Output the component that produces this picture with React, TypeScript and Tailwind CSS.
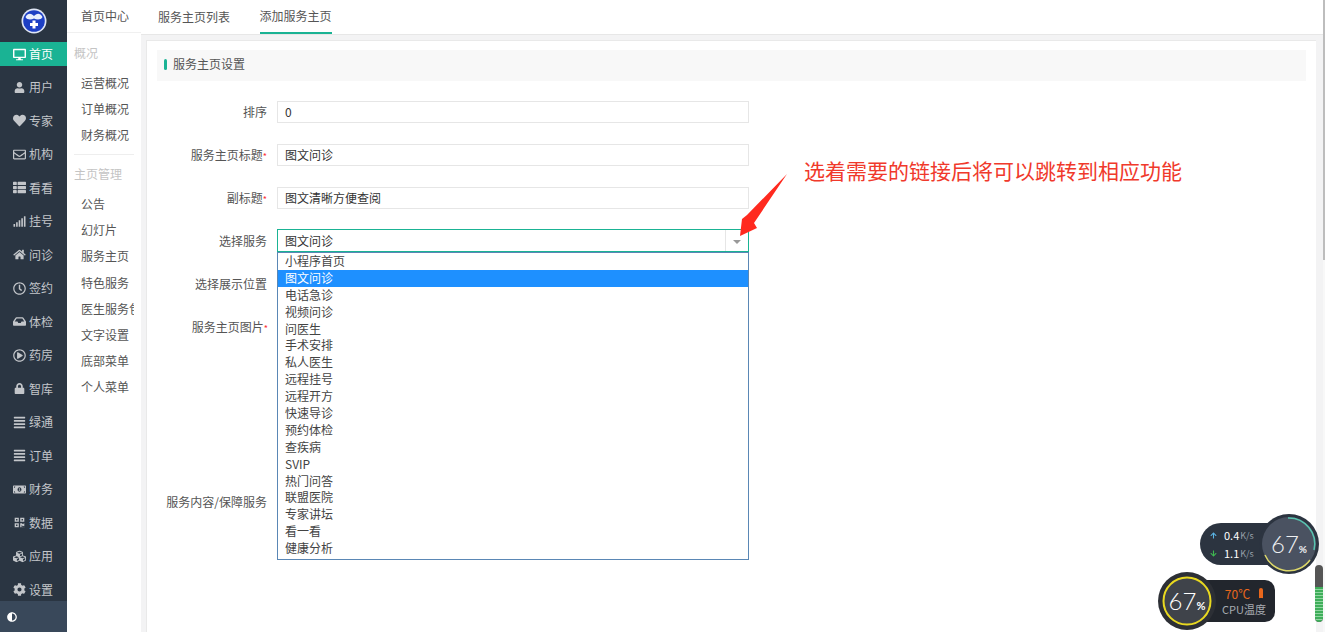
import type { ComponentType } from "react";
import {
  FaAdjust,
  FaAlignJustify,
  FaArrowDown,
  FaArrowUp,
  FaCog,
  FaCubes,
  FaDesktop,
  FaHeart,
  FaHome,
  FaInbox,
  FaLock,
  FaMoneyBillAlt,
  FaQrcode,
  FaRegClock,
  FaRegEnvelope,
  FaRegPlayCircle,
  FaSignal,
  FaThList,
  FaUser,
} from "react-icons/fa";

const navItems: { label: string; icon: ComponentType<{ className?: string }>; iconClass?: string }[] = [
  { label: "首页", icon: FaDesktop },
  { label: "用户", icon: FaUser, iconClass: "h-[11px] w-[13px]" },
  { label: "专家", icon: FaHeart },
  { label: "机构", icon: FaRegEnvelope },
  { label: "看看", icon: FaThList },
  { label: "挂号", icon: FaSignal },
  { label: "问诊", icon: FaHome, iconClass: "h-[11px] w-[13px]" },
  { label: "签约", icon: FaRegClock },
  { label: "体检", icon: FaInbox },
  { label: "药房", icon: FaRegPlayCircle },
  { label: "智库", icon: FaLock, iconClass: "h-[11px] w-[13px]" },
  { label: "绿通", icon: FaAlignJustify },
  { label: "订单", icon: FaAlignJustify },
  { label: "财务", icon: FaMoneyBillAlt },
  { label: "数据", icon: FaQrcode, iconClass: "h-[11px] w-[13px]" },
  { label: "应用", icon: FaCubes },
  { label: "设置", icon: FaCog },
];

const overviewLinks = ["运营概况", "订单概况", "财务概况"];
const homeLinks = ["公告", "幻灯片", "服务主页", "特色服务", "医生服务包", "文字设置", "底部菜单", "个人菜单"];
const options = [
  "小程序首页",
  "图文问诊",
  "电话急诊",
  "视频问诊",
  "问医生",
  "手术安排",
  "私人医生",
  "远程挂号",
  "远程开方",
  "快速导诊",
  "预约体检",
  "查疾病",
  "SVIP",
  "热门问答",
  "联盟医院",
  "专家讲坛",
  "看一看",
  "健康分析",
];

function Field({ label, value, required }: { label: string; value: string; required?: boolean }) {
  return (
    <div className="mb-[21px] flex h-[22px] items-center">
      <div className="w-[121px] text-right leading-none text-[#555]">
        {label}
        {required && <span className="text-[9px] text-red-500">*</span>}
      </div>
      <div className="ml-[10px] flex h-[22px] w-[472px] items-center border border-[#e6e6e6] bg-white pb-px pl-[7px] text-[#333]">
        {value}
      </div>
    </div>
  );
}

function Logo() {
  return (
    <svg viewBox="0 0 26 26" className="h-[26px] w-[26px]">
      <circle cx="13" cy="13" r="12.5" fill="#dfe6f5" />
      <circle cx="13" cy="13" r="10.8" fill="#1d3fc4" />
      <path d="M4.5 9 C7 4 11 5.5 13 8 C15 5.5 19 4 21.5 9 C20 12 16 12 13 10.5 C10 12 6 12 4.5 9Z" fill="#e8eefc" />
      <path d="M11.5 12.5h3V15H17v3h-2.5v2.5h-3V18H9v-3h2.5Z" fill="#fff" />
    </svg>
  );
}

export default function App() {
  return (
    <div className="relative flex h-[632px] w-[1325px] overflow-hidden bg-[#f3f3f4] text-[12px] font-['Noto_Sans_CJK_SC','Liberation_Sans',sans-serif]">
      {/* main nav */}
      <aside className="flex w-[67px] shrink-0 flex-col bg-[#2a3542] text-[#c3c6ca]">
        <div className="flex h-[42px] shrink-0 items-start justify-center pt-[8px]">
          <Logo />
        </div>
        <nav className="h-[559px] shrink-0">
          {navItems.map((item, i) => {
            const Icon = item.icon;
            return (
              <div
                key={item.label}
                className={`flex h-[24px] items-center pl-[13px] ${
                  i === 0 ? "mb-[9px] bg-[#1ab394] text-white" : "mb-[9.5px]"
                }`}
              >
                <Icon className={`mr-[3px] shrink-0 ${item.iconClass ?? "h-[13px] w-[13px]"}`} />
                <span className="leading-none">{item.label}</span>
              </div>
            );
          })}
        </nav>
        <div className="flex h-[31px] shrink-0 items-center bg-[#39485a] pl-[7px] text-white">
          <FaAdjust className="h-[10px] w-[10px]" />
        </div>
      </aside>

      {/* sub nav */}
      <aside className="w-[74px] shrink-0 overflow-hidden bg-white text-[#555]">
        <div className="flex h-[33px] items-center whitespace-nowrap border-b border-[#f0f0f0] pl-[14px]">首页中心</div>
        <div className="pl-[7px] pt-[11px] leading-[18px] text-[#c4c4c4]">概况</div>
        <div className="mt-[8px]">
          {overviewLinks.map((link) => (
            <div key={link} className="flex h-[26px] items-center pl-[14px]">
              {link}
            </div>
          ))}
        </div>
        <div className="mx-[7px] mt-[6px] border-t border-[#eee]" />
        <div className="pl-[7px] pt-[10px] leading-[18px] text-[#c4c4c4]">主页管理</div>
        <div className="mt-[8px]">
          {homeLinks.map((link) => (
            <div key={link} className="flex h-[26.2px] w-[67px] items-center overflow-hidden whitespace-nowrap pl-[14px]">
              {link}
            </div>
          ))}
        </div>
      </aside>

      {/* content */}
      <main className="flex min-w-0 flex-1 flex-col">
        <div className="flex h-[35px] shrink-0 gap-[29.5px] border-b border-[#e7e7e7] bg-white pl-[17px] text-[#555]">
          <div className="flex h-[34px] items-center">服务主页列表</div>
          <div className="flex h-[34px] items-center border-b-2 border-[#1ab394]">添加服务主页</div>
        </div>
        <div className="ml-[5px] mr-[9px] mt-[5px] flex-1 border-l border-t border-[#e9e9e9] bg-white px-[10px] pt-[9px]">
          <div className="flex h-[31px] w-[1149px] items-center bg-[#f8f8f8] pb-[3px] pl-[7px] text-[#555]">
            <span className="mr-[6px] h-[11px] w-[3px] rounded-sm bg-[#1ab394]" />
            服务主页设置
          </div>

          <div className="relative -ml-[11px] mt-[20px]">
            <Field label="排序" value="0" />
            <Field label="服务主页标题" value="图文问诊" required />
            <Field label="副标题" value="图文清晰方便查阅" required />

            <div className="-mt-px flex h-[23px] items-center">
              <div className="w-[121px] text-right leading-none text-[#555]">选择服务</div>
              <div className="relative ml-[10px] flex h-[23px] w-[472px] items-center border border-[#1ab394] bg-white pl-[7px] text-[#333]">
                图文问诊
                <span className="absolute right-0 top-0 flex h-full w-[23px] items-center justify-center border-l border-[#e6e6e6]">
                  <span className="mt-[2px] border-x-[4px] border-t-[4px] border-x-transparent border-t-[#999]" />
                </span>
                <div className="absolute left-[-1px] top-[22px] z-10 w-[472px] border border-[#5a87b5] bg-white pb-[2px]">
                  {options.map((option, i) => (
                    <div
                      key={option}
                      className={`flex h-[16.9px] items-center pb-px pl-[7px] ${
                        i === 1 ? "bg-[#1e90ff] text-white" : "text-[#444]"
                      }`}
                    >
                      {option}
                    </div>
                  ))}
                </div>
              </div>
            </div>

            <div className="mt-[20px] w-[121px] text-right leading-[23px] text-[#555]">选择展示位置</div>
            <div className="mt-[20px] w-[122px] text-right leading-[23px] text-[#555]">
              服务主页图片<span className="text-[9px] text-red-500">*</span>
            </div>
            <div className="mt-[150px] w-[121px] text-right leading-[23px] text-[#555]">服务内容/保障服务</div>
          </div>
        </div>
      </main>

      {/* page scrollbar */}
      <div className="absolute right-0 top-0 h-[260px] w-[2px] bg-[#bdbdbd]" />
      <div className="absolute right-0 top-[260px] h-[372px] w-[2px] bg-[#f8f8f8]" />

      {/* annotation */}
      <div className="absolute left-[804px] top-[157px] text-[21px] leading-[26px] text-[#f0392b]">
        选着需要的链接后将可以跳转到相应功能
      </div>
      <svg className="absolute left-[730px] top-[170px]" width="60" height="76" viewBox="0 0 60 76">
        <path d="M57 4 L24 53 L27 58 L10 66 L12 49 L17 45 Z" fill="#ff2a1f" />
      </svg>

      {/* system monitor widgets */}
      <div className="absolute left-[1200px] top-[523px] flex h-[42px] w-[80px] flex-col justify-center gap-[7px] rounded-l-[21px] bg-[#2c3440] pl-[10px] text-[11px] leading-none text-white">
        <div className="flex items-center">
          <FaArrowUp className="mr-[7px] h-[7px] w-[7px] text-[#5bb4e5]" />0.4
          <span className="ml-px text-[9px] text-[#9aa1ab]">K/s</span>
        </div>
        <div className="flex items-center">
          <FaArrowDown className="mr-[7px] h-[7px] w-[7px] text-[#3fb950]" />1.1
          <span className="ml-px text-[9px] text-[#9aa1ab]">K/s</span>
        </div>
      </div>
      <div className="absolute left-[1259px] top-[514px] flex h-[60px] w-[60px] items-center justify-center rounded-full bg-[#2c3440]">
        <svg className="absolute inset-0" viewBox="0 0 60 60">
          <circle cx="30" cy="30" r="27" fill="#4a5261" />
          <path d="M29 4 A26 26 0 0 1 55 36" fill="none" stroke="#58c4b0" strokeWidth="1.5" />
          <path d="M51 46 A26 26 0 0 1 6 41" fill="none" stroke="#dcd76a" strokeWidth="1.5" />
        </svg>
        <span className="relative font-['Lato',sans-serif] text-[24px] font-light leading-none text-[#eef0f2]">
          67<span className="text-[10px] font-bold">%</span>
        </span>
      </div>

      <div className="absolute left-[1205px] top-[580px] flex h-[42px] w-[70px] flex-col items-center justify-center rounded-r-[10px] bg-[#22262d] pl-[8px] leading-none">
        <div className="flex items-center text-[12px] text-[#e8671c]">
          70℃<span className="ml-[9px] h-[12px] w-[4px] rounded-sm border-b-2 border-b-[#22262d] bg-[#e8671c]" />
        </div>
        <div className="mt-[4px] whitespace-nowrap text-[11px] text-[#a7abb1]">CPU温度</div>
      </div>
      <div className="absolute left-[1158px] top-[572px] flex h-[58px] w-[58px] items-center justify-center rounded-full bg-[#2c2f35]">
        <svg className="absolute inset-0" viewBox="0 0 58 58">
          <circle cx="29" cy="29" r="23.5" fill="#3f434a" stroke="#e8d820" strokeWidth="2" />
        </svg>
        <span className="relative font-['Lato',sans-serif] text-[24px] font-light leading-none text-white">
          67<span className="text-[11px] font-bold">%</span>
        </span>
      </div>
      <div className="absolute left-[1315px] top-[565px] flex h-[57px] w-[8px] flex-col justify-end overflow-hidden rounded-full bg-[#555]">
        <div className="h-[35px] rounded-b-full bg-[repeating-linear-gradient(to_bottom,#3fae5a_0,#3fae5a_2px,#8fd6a0_2px,#8fd6a0_3px)]" />
      </div>
    </div>
  );
}
